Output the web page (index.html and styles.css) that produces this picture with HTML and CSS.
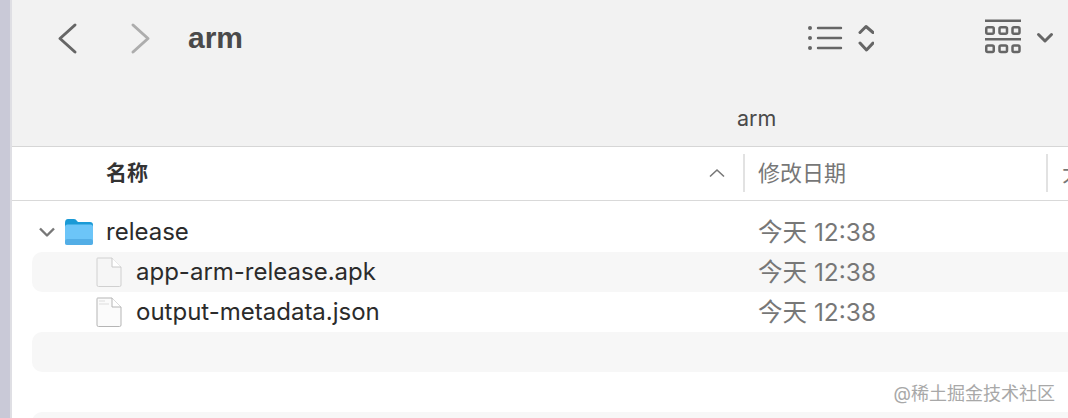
FILE: index.html
```html
<!DOCTYPE html>
<html lang="en">
<head>
<meta charset="UTF-8">
<meta name="viewport" content="width=device-width, initial-scale=1.0">
<title>arm</title>
<link rel="stylesheet" href="styles.css">
</head>
<body>

<div class="window">
  <div class="toolbar">
    <div class="toolbar-top">
      <svg class="nav-icon" width="24" height="34" viewBox="0 0 24 34">
        <polyline points="19,4 4,17.5 19,31" fill="none" stroke="#666" stroke-width="3" stroke-linecap="round" stroke-linejoin="round"/>
      </svg>
      <svg class="nav-icon forward" width="24" height="34" viewBox="0 0 24 34">
        <polyline points="5,4 20,17.5 5,31" fill="none" stroke="#adadad" stroke-width="3" stroke-linecap="round" stroke-linejoin="round"/>
      </svg>
      <span class="folder-title">arm</span>

      <!-- list view + stepper -->
      <svg class="list-icon" width="68" height="34" viewBox="0 0 68 34">
        <g fill="#666">
          <circle cx="4" cy="7" r="2"/>
          <circle cx="4" cy="17" r="2"/>
          <circle cx="4" cy="27" r="2"/>
        </g>
        <g stroke="#666" stroke-width="2.4" stroke-linecap="round" fill="none">
          <path d="M12 7H35M12 17H35M12 27H35"/>
          <path stroke-width="3" stroke-linejoin="round" d="M54 11.500L60 5.500L67 11.500M54 22L60.500 29L67 22"/>
        </g>
      </svg>

      <!-- group by -->
      <svg class="group-icon" width="70" height="38" viewBox="0 0 70 38">
        <g stroke="#666" fill="none">
          <path stroke-width="2.400" d="M0 1.700H36M0 20.300H36"/>
          <g stroke-width="2.500">
            <rect x="1.250" y="8.250" width="7.500" height="6.500" rx="1.500"/>
            <rect x="14.500" y="8.250" width="7.500" height="6.500" rx="1.500"/>
            <rect x="27.500" y="8.250" width="7" height="6.500" rx="1.500"/>
            <rect x="1.250" y="26.500" width="7.500" height="6.500" rx="1.500"/>
            <rect x="14.500" y="26.500" width="7.500" height="6.500" rx="1.500"/>
            <rect x="27.500" y="26.500" width="7" height="6.500" rx="1.500"/>
          </g>
          <path stroke-width="3" stroke-linecap="round" stroke-linejoin="round" d="M53.500 15.500L60 22L66.500 15.500"/>
        </g>
      </svg>
    </div>
    <div class="toolbar-tab">arm</div>
  </div>

  <div class="header">
    <div class="col-name">
      <span class="header-name">名称</span>
      <svg width="16" height="10" viewBox="0 0 16 10">
        <polyline points="1,8.500 8,2 15,8.500" fill="none" stroke="#777" stroke-width="1.600"/>
      </svg>
    </div>
    <div class="col-date">修改日期</div>
    <div class="col-size">大小</div>
  </div>

  <div class="rows">
    <div class="row">
      <div class="cell-name">
        <svg class="disclosure" width="18" height="12" viewBox="0 0 18 12">
          <polyline points="2,2.500 9,9.500 16,2.500" fill="none" stroke="#777" stroke-width="2.400" stroke-linejoin="round"/>
        </svg>
        <svg class="folder" width="30" height="28" viewBox="0 0 30 28">
          <path d="M1 5Q1 1 4 1H10Q12 1 13 3L14 4H26Q29 4 29 7V12H1Z" fill="#1a9ad6"/>
          <rect x="1" y="6.500" width="28" height="20.500" rx="2.500" fill="#6cc5f8"/>
          <rect x="1" y="21" width="28" height="6" rx="2.500" fill="#53aee6"/>
        </svg>
        <span>release</span>
      </div>
      <div class="col-date cell-date">今天 12:38</div>
    </div>

    <div class="row child striped">
      <div class="cell-name">
        <svg class="file" width="26" height="30" viewBox="0 0 26 30">
          <path d="M1.500 1H16L25 10V28Q25 29.500 23.500 29.500H2.500Q1 29.500 1 28V2Q1 1 1.500 1Z" fill="#f6f6f6" stroke="#d0d0d0"/>
          <path d="M16 1V10H25" fill="#fff" stroke="#c8c8c8"/>
        </svg>
        <span>app-arm-release.apk</span>
      </div>
      <div class="col-date cell-date">今天 12:38</div>
    </div>

    <div class="row child">
      <div class="cell-name">
        <svg class="file" width="26" height="30" viewBox="0 0 26 30">
          <path d="M1.500 1H16L25 10V28Q25 29.500 23.500 29.500H2.500Q1 29.500 1 28V2Q1 1 1.500 1Z" fill="#fbfbfb" stroke="#b5b5b5"/>
          <path d="M16 1V10H25" fill="#fff" stroke="#b5b5b5"/>
          <path d="M3 4H9M3 7H13" stroke="#ddd"/>
        </svg>
        <span>output-metadata.json</span>
      </div>
      <div class="col-date cell-date">今天 12:38</div>
    </div>

    <div class="row striped"></div>
    <div class="row"></div>
    <div class="row striped"></div>
  </div>

  <div class="watermark">@稀土掘金技术社区</div>
</div>

</body>
</html>
```

FILE: styles.css
```css
html, body {
  margin: 0;
  height: 100%;
  overflow: hidden;
}

body {
  background-color: #c9c9d7;
  font-family: Inter, "Noto Sans CJK SC", sans-serif;
}

.window {
  position: relative;
  height: 100%;
  margin-left: 10px;
  border-left: 2px solid #dfdfe4;
  background-color: #fff;
  overflow: hidden;
}

.toolbar {
  height: 147px;
  box-sizing: border-box;
  background-color: #f2f2f2;
  border-bottom: 1px solid #d6d6d6;
}

.toolbar-top {
  display: flex;
  align-items: center;
  height: 76px;
}

.nav-icon {
  margin-left: 44px;
  flex-shrink: 0;
}

.nav-icon.forward {
  margin-left: 48px;
}

.folder-title {
  margin-left: 36px;
  font-family: "Liberation Sans", sans-serif;
  font-size: 30px;
  font-weight: bold;
  color: #4a4a4a;
}

.list-icon {
  margin-left: 563px;
  flex-shrink: 0;
}

.group-icon {
  margin-left: 111px;
  flex-shrink: 0;
}

.toolbar-tab {
  margin-top: 25px;
  padding-left: 725px;
  font-size: 21.500px;
  line-height: 34px;
  color: #4a4a4a;
}

.header {
  display: flex;
  align-items: center;
  height: 54px;
  box-sizing: border-box;
  padding-bottom: 1px;
  border-bottom: 1px solid #d9d9d9;
}

.col-name {
  display: flex;
  justify-content: space-between;
  align-items: center;
  width: 733px;
  height: 38px;
  box-sizing: border-box;
  padding: 0 18px 0 94px;
  border-right: 2px solid #e2e2e2;
  flex-shrink: 0;
}

.header-name {
  padding-bottom: 4px;
  font-size: 21px;
  font-weight: bold;
  color: #333;
}

.col-date {
  width: 303px;
  box-sizing: border-box;
  padding-left: 13px;
  font-size: 22px;
  color: #777;
  flex-shrink: 0;
}

.header .col-date {
  display: flex;
  align-items: center;
  height: 38px;
  padding-bottom: 4px;
  border-right: 2px solid #e2e2e2;
}

.col-size {
  padding-left: 14px;
  padding-bottom: 4px;
  font-size: 22px;
  color: #777;
  white-space: nowrap;
}

.rows {
  padding-top: 11px;
}

.row {
  display: flex;
  align-items: center;
  height: 40px;
  margin-left: 20px;
}

.row.striped {
  background-color: #f7f7f7;
  border-radius: 10px 0 0 10px;
}

.cell-name {
  display: flex;
  align-items: center;
  width: 713px;
  flex-shrink: 0;
  font-size: 24px;
  color: #2b2b2b;
}

.cell-name span {
  padding-bottom: 2px;
}

.disclosure {
  margin-left: 6px;
}

.folder {
  margin-left: 8px;
  margin-right: 12px;
}

.child .file {
  margin-left: 64px;
  margin-right: 14px;
}

.cell-date {
  padding-bottom: 4px;
  font-size: 24.500px;
}

.watermark {
  position: absolute;
  right: 13px;
  top: 379px;
  font-size: 18px;
  color: #a8a8a8;
  background-color: rgba(255, 255, 255, 0.6);
}
```
